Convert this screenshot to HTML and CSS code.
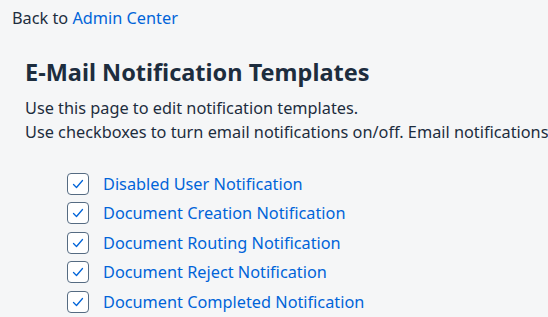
FILE: index.html
```html
<!DOCTYPE html>
<html>
<head>
<meta charset="utf-8">
<link rel="stylesheet" href="styles.css">
</head>
<body>
<div class="page">
  <div class="back">Back to <a class="link" href="#">Admin Center</a></div>
  <div class="content">
    <h1 class="title">E-Mail Notification Templates</h1>
    <p class="desc">Use this page to edit notification templates.<br>Use checkboxes to turn email notifications on/off. Email notifications</p>
    <ul class="list">
      <li class="item"><span class="box"><svg viewBox="0 0 22 22" width="22" height="22"><path d="M6.5 11.5 L9.5 14.5 L15.5 7.5" fill="none" stroke="#0064d9" stroke-width="1.3" stroke-linecap="round" stroke-linejoin="round"/></svg></span><a class="link" href="#">Disabled User Notification</a></li>
      <li class="item"><span class="box"><svg viewBox="0 0 22 22" width="22" height="22"><path d="M6.5 11.5 L9.5 14.5 L15.5 7.5" fill="none" stroke="#0064d9" stroke-width="1.3" stroke-linecap="round" stroke-linejoin="round"/></svg></span><a class="link" href="#">Document Creation Notification</a></li>
      <li class="item"><span class="box"><svg viewBox="0 0 22 22" width="22" height="22"><path d="M6.5 11.5 L9.5 14.5 L15.5 7.5" fill="none" stroke="#0064d9" stroke-width="1.3" stroke-linecap="round" stroke-linejoin="round"/></svg></span><a class="link" href="#">Document Routing Notification</a></li>
      <li class="item"><span class="box"><svg viewBox="0 0 22 22" width="22" height="22"><path d="M6.5 11.5 L9.5 14.5 L15.5 7.5" fill="none" stroke="#0064d9" stroke-width="1.3" stroke-linecap="round" stroke-linejoin="round"/></svg></span><a class="link" href="#">Document Reject Notification</a></li>
      <li class="item"><span class="box"><svg viewBox="0 0 22 22" width="22" height="22"><path d="M6.5 11.5 L9.5 14.5 L15.5 7.5" fill="none" stroke="#0064d9" stroke-width="1.3" stroke-linecap="round" stroke-linejoin="round"/></svg></span><a class="link" href="#">Document Completed Notification</a></li>
    </ul>
  </div>
</div>
</body>
</html>
```
FILE: styles.css
```css
html, body {
  margin: 0;
  padding: 0;
  background: #f5f6f7;
  overflow: hidden;
}
body {
  font-family: "Noto Sans", "Open Sans", sans-serif;
  color: #1d2d3e;
  white-space: nowrap;
}
.page {
  padding: 8px 0 0 12px;
}
.back {
  font-size: 16.3px;
  line-height: 20px;
}
.link {
  color: #0064d9;
  text-decoration: none;
}
.content {
  padding: 30px 0 0 13px;
}
.title {
  margin: 0;
  font-size: 23.5px;
  font-weight: bold;
  line-height: 28px;
}
.desc {
  margin: 10px 0 0 0;
  font-size: 16.3px;
  line-height: 24px;
}
.list {
  list-style: none;
  margin: 25px 0 0 0;
  padding: 0 0 0 42px;
}
.item {
  display: flex;
  align-items: center;
  gap: 14px;
  height: 29.5px;
  font-size: 16.3px;
}
.box {
  width: 20px;
  height: 20px;
  border: 1px solid #556b82;
  border-radius: 4px;
  background: #fff;
  display: flex;
  align-items: center;
  justify-content: center;
  overflow: hidden;
}
.box svg {
  flex: none;
}
```
